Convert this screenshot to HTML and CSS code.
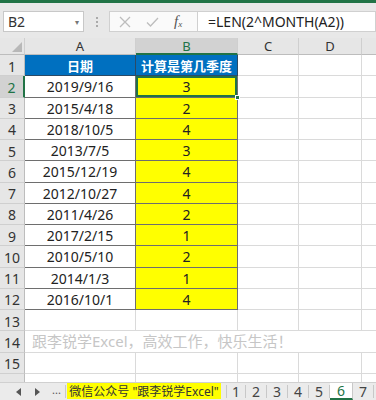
FILE: index.html
```html
<!DOCTYPE html>
<html>
<head>
<meta charset="utf-8">
<link rel="stylesheet" href="styles.css">
</head>
<body>
<div class="app">
  <div class="topstrip"></div>
  <div class="toolbar">
    <div class="namebox"><span>B2</span><span class="caret">&#9662;</span></div>
    <div class="grip"><i></i><i></i><i></i></div>
    <div class="fbtns">
      <svg width="12" height="12" viewBox="0 0 12 12"><path d="M1 1L11 11M11 1L1 11" stroke="#bdbdbd" stroke-width="1.3" fill="none"/></svg>
      <svg width="13" height="12" viewBox="0 0 13 12"><path d="M1 6.5L4.5 10L12 2" stroke="#bdbdbd" stroke-width="1.3" fill="none"/></svg>
      <span class="fx">f<sub>x</sub></span>
    </div>
    <div class="formula">=LEN(2^MONTH(A2))</div>
  </div>
  <div class="sheet">
    <div class="grid">
      <div class="ch corner"><svg width="10" height="10" viewBox="0 0 10 10"><path d="M10 0L10 10L0 10Z" fill="#b8b8b8"/></svg></div>
      <div class="ch">A</div>
      <div class="ch sel">B</div>
      <div class="ch">C</div>
      <div class="ch">D</div>
      <div class="ch"></div>

      <div class="rh">1</div><div class="c th">日期</div><div class="c th">计算是第几季度</div><div class="g"></div><div class="g"></div><div class="g"></div>
      <div class="rh rsel">2</div><div class="c a">2019/9/16</div><div class="c b active">3<span class="handle"></span></div><div class="g"></div><div class="g"></div><div class="g"></div>
      <div class="rh">3</div><div class="c a">2015/4/18</div><div class="c b">2</div><div class="g"></div><div class="g"></div><div class="g"></div>
      <div class="rh">4</div><div class="c a">2018/10/5</div><div class="c b">4</div><div class="g"></div><div class="g"></div><div class="g"></div>
      <div class="rh">5</div><div class="c a">2013/7/5</div><div class="c b">3</div><div class="g"></div><div class="g"></div><div class="g"></div>
      <div class="rh">6</div><div class="c a">2015/12/19</div><div class="c b">4</div><div class="g"></div><div class="g"></div><div class="g"></div>
      <div class="rh">7</div><div class="c a">2012/10/27</div><div class="c b">4</div><div class="g"></div><div class="g"></div><div class="g"></div>
      <div class="rh">8</div><div class="c a">2011/4/26</div><div class="c b">2</div><div class="g"></div><div class="g"></div><div class="g"></div>
      <div class="rh">9</div><div class="c a">2017/2/15</div><div class="c b">1</div><div class="g"></div><div class="g"></div><div class="g"></div>
      <div class="rh">10</div><div class="c a">2010/5/10</div><div class="c b">2</div><div class="g"></div><div class="g"></div><div class="g"></div>
      <div class="rh">11</div><div class="c a">2014/1/3</div><div class="c b">1</div><div class="g"></div><div class="g"></div><div class="g"></div>
      <div class="rh">12</div><div class="c a">2016/10/1</div><div class="c b">4</div><div class="g"></div><div class="g"></div><div class="g"></div>
      <div class="rh">13</div><div class="g"></div><div class="g"></div><div class="g"></div><div class="g"></div><div class="g"></div>
      <div class="rh">14</div><div class="g note">跟李锐学Excel，高效工作，快乐生活！</div><div class="g"></div>
      <div class="rh">15</div><div class="g"></div><div class="g"></div><div class="g"></div><div class="g"></div><div class="g"></div>
      <div class="rh"></div><div class="g"></div><div class="g"></div><div class="g"></div><div class="g"></div><div class="g"></div>
    </div>
  </div>
  <div class="tabbar">
    <div class="nav">
      <svg width="6" height="8" viewBox="0 0 6 8"><path d="M5 0L0 4L5 8Z" fill="#555"/></svg>
      <svg width="6" height="8" viewBox="0 0 6 8"><path d="M1 0L6 4L1 8Z" fill="#555"/></svg>
      <span class="dots">...</span>
    </div>
    <div class="tab promo">微信公众号 "跟李锐学Excel"</div>
    <div class="tab first">1</div>
    <div class="tab">2</div>
    <div class="tab">3</div>
    <div class="tab">4</div>
    <div class="tab">5</div>
    <div class="tab on">6</div>
    <div class="tab">7</div>
  </div>
</div>
</body>
</html>
```
FILE: styles.css
```css
* { box-sizing: border-box; }
html, body { margin: 0; padding: 0; }
body {
  width: 376px;
  height: 400px;
  overflow: hidden;
  font-family: "Noto Sans", "Noto Sans CJK SC", sans-serif;
  color: #222;
  background: #fff;
}
.app {
  display: flex;
  flex-direction: column;
  height: 400px;
}
.topstrip {
  height: 3px;
  background: #217346;
  flex: none;
}
.toolbar {
  height: 35px;
  flex: none;
  background: #e8e8e8;
  display: flex;
  align-items: flex-start;
  padding: 8px 0 0 3px;
}
.namebox {
  width: 81px;
  height: 21px;
  background: #fff;
  border: 1px solid #c8c8c8;
  display: flex;
  align-items: center;
  justify-content: space-between;
  padding: 0 4px 0 4px;
  font-size: 14px;
  color: #333;
}
.caret {
  font-size: 8px;
  color: #777;
}
.grip {
  width: 25px;
  height: 21px;
  display: flex;
  flex-direction: column;
  align-items: center;
  justify-content: center;
  gap: 2px;
}
.grip i {
  width: 2px;
  height: 2px;
  background: #aaa;
  display: block;
}
.fbtns {
  width: 89px;
  height: 21px;
  background: #fafafa;
  border: 1px solid #d0d0d0;
  display: flex;
  align-items: center;
  padding-left: 9px;
  gap: 15px;
}
.fx {
  font-family: "Liberation Serif", serif;
  font-style: italic;
  font-size: 15px;
  color: #555;
  line-height: 1;
}
.fx sub {
  font-size: 9px;
  vertical-align: -1px;
}
.formula {
  flex: 1;
  height: 21px;
  background: #fff;
  border: 1px solid #d0d0d0;
  border-left: none;
  font-size: 14px;
  line-height: 19px;
  padding-left: 10px;
  color: #222;
}
.sheet {
  flex: 1;
  overflow: hidden;
  min-height: 0;
}
.grid {
  display: grid;
  grid-template-columns: 25px 111px 102px 61px 63px 40px;
  grid-template-rows: 17px;
  grid-auto-rows: 21.25px;
}
.ch {
  background: #e6e6e6;
  border-right: 1px solid #cfcfcf;
  border-bottom: 1px solid #bdbdbd;
  font-size: 13px;
  line-height: 14px;
  color: #333;
  display: flex;
  align-items: center;
  justify-content: center;
}
.ch.corner {
  align-items: flex-end;
  justify-content: flex-end;
  padding: 0 2px 2px 0;
}
.ch.sel {
  background: #d2d2d2;
  color: #217346;
  border-bottom: 2px solid #217346;
}
.rh {
  background: #e6e6e6;
  border-right: 1px solid #bdbdbd;
  border-bottom: 1px solid #cfcfcf;
  font-size: 14px;
  color: #333;
  display: flex;
  align-items: center;
  justify-content: center;
  padding-top: 2px;
}
.rh.rsel {
  background: #d2d2d2;
  color: #217346;
  border-right: 2px solid #217346;
}
.g {
  border-right: 1px solid #dadada;
  border-bottom: 1px solid #dadada;
}
.c {
  border-right: 1px solid #6e6e6e;
  border-bottom: 1px solid #6e6e6e;
  display: flex;
  align-items: center;
  justify-content: center;
  font-size: 14px;
  color: #222;
  padding-top: 1px;
}
.c.th {
  background: #0070c0;
  color: #fff;
  font-weight: bold;
  font-size: 13px;
  border-color: #2b4a66;
}
.c.a { background: #fff; }
.c.b { background: #ffff00; }
.c.active {
  position: relative;
  box-shadow: inset 0 0 0 2px #217346;
}
.handle {
  position: absolute;
  right: -3px;
  bottom: -3px;
  width: 5px;
  height: 5px;
  background: #217346;
  border: 1px solid #fff;
}
.g.note {
  grid-column: 2 / span 4;
  color: #c6c6c6;
  font-size: 15px;
  line-height: 21px;
  padding-left: 7px;
  white-space: nowrap;
  border-right: none;
}
.tabbar {
  height: 18px;
  flex: none;
  background: #ebebeb;
  border-top: 1px solid #d0d0d0;
  display: flex;
  align-items: stretch;
}
.nav {
  width: 66px;
  flex: none;
  display: flex;
  align-items: center;
  padding-left: 16px;
  gap: 12px;
  border-right: 1px solid #c8c8c8;
  margin: 2px 0;
}
.dots {
  font-size: 11px;
  color: #555;
  line-height: 1;
  margin-top: -4px;
}
.tab {
  width: 21px;
  flex: none;
  font-size: 14px;
  color: #444;
  display: flex;
  align-items: center;
  justify-content: center;
  border-right: 1px solid #c8c8c8;
  margin: 2px 0;
}
.tab.promo {
  width: 154px;
  margin: 0 0 1px 1px;
  padding: 0;
  background: #ffff00;
  color: #333;
  border-right: none;
  white-space: nowrap;
  font-size: 12px;
}
.tab.first {
  width: 20px;
  border-left: 1px solid #c8c8c8;
  margin-left: 5px;
}
.tab.on {
  width: 23px;
  margin: 0;
  background: #fff;
  color: #217346;
  border-bottom: 2px solid #217346;
}
```
